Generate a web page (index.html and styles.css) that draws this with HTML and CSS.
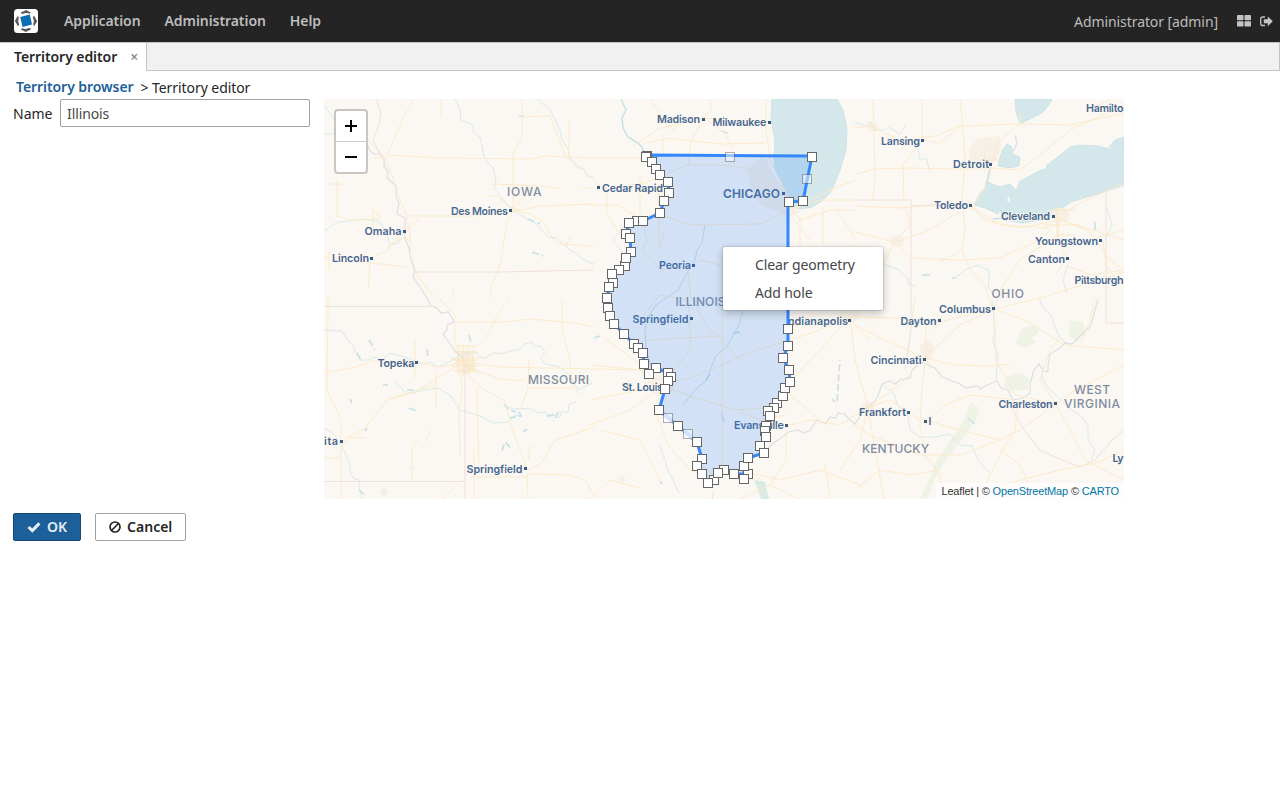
FILE: index.html
```html
<!DOCTYPE html>
<html lang="en">
<head>
<meta charset="utf-8">
<title>Territory editor</title>
<link rel="stylesheet" href="styles.css">
</head>
<body>
<header class="topbar">
  <svg class="logo" width="24" height="24" viewBox="0 0 24 24">
    <rect width="24" height="24" rx="3.5" fill="#fff"/>
    <path d="M6.200 8 15.800 5.600 18 15.400 8.600 18z" fill="#0b6fb5"/>
    <path d="M6.800 3.600 12.200 .9 17.300 3.900 15.300 4.600Q11.500 3.400 8.300 5.200zM20 6.500 23.200 12.200 20 17.200 19.200 15.400Q20.800 12 18.800 8.300zM17.200 20.200 11.700 23.100 6.500 20.200 8.500 19.200Q12 20.800 15.600 18.800zM4 17.300 .8 12 3.800 6.700 4.800 8.600Q3.300 12 5.200 15.700z" fill="#5a5a5a"/>
  </svg>
  <nav class="menu"><a>Application</a><a>Administration</a><a>Help</a></nav>
  <span class="user">Administrator [admin]</span>
  <svg class="ico-grid" width="14" height="12" viewBox="0 0 14 12" fill="#c4c4c4"><rect width="6.500" height="5.300" rx=".8"/><rect x="7.500" width="6.500" height="5.300" rx=".8"/><rect y="6.200" width="6.500" height="5.300" rx=".8"/><rect x="7.500" y="6.200" width="6.500" height="5.300" rx=".8"/></svg>
  <svg class="ico-exit" width="13" height="11" viewBox="0 0 13 11"><path d="M5 1H2.500Q.7 1 .7 2.800v4.400Q.7 9.500 2.500 9.500H5" fill="none" stroke="#c4c4c4" stroke-width="1.300"/><path d="M3.800 3.300h4V.5L12.800 5.300 7.800 10.200V7.300h-4z" fill="#c4c4c4"/></svg>
</header>
<div class="tabs">
  <div class="tab">Territory editor<span class="close">×</span></div>
  <div class="tabs-rest"></div>
</div>
<main class="page">
  <div class="crumbs"><a>Territory browser</a><span>&gt; Territory editor</span></div>
  <div class="editor">
    <label class="caption" for="name">Name</label>
    <input id="name" class="field" value="Illinois">
    <div class="map">
      <svg class="map-canvas" width="800" height="400" viewBox="324 99 800 400">
        <defs>
          <marker id="vertex" markerUnits="userSpaceOnUse" markerWidth="10" markerHeight="10" viewBox="0 0 10 10" refX="5" refY="5"><rect x=".5" y=".5" width="9" height="9" fill="#fff" stroke="#666"/></marker>
        </defs>
        <rect x="324" y="99" width="800" height="400" fill="#fbf8f3"/>

        <!-- lakes -->
        <g fill="#d4e8eb" stroke="#c9e0e5" stroke-width=".8">
          <path d="M772 99 771 120 775 140 774 158 775 169 780 178 786 190 788 200 793 207 800 209 812 207 822 201 830 193 835 183 840 170 846 150 847 128 843 110 837 99z"/>
          <path d="M1015 99 1016 112 1020 124 1032 118 1042 113 1048 106 1052 99z"/>
          <path d="M974 205 979 195 985 188 987 181 992 184 1000 187 1010 184 1014 188 1016 191 1020 181 1030 176 1041 170 1046 169 1047 165 1059 156 1070 147 1080 145 1098 146 1113 150 1124 153V185L1104 192 1084 198 1071 202 1060 210 1054 215 1041 220 1022 223 1004 220 1000 209 998 214 985 208z"/>
          <path d="M998 166 1000 157 1003 149 1007 144 1012 147 1012 154 1020 157 1019 166 1008 168z"/>
          <path d="M1109 147 1115 140 1124 137V152z"/>
        </g>
        <path d="M990 168 988 178 986 184" fill="none" stroke="#c9e0e5" stroke-width="2"/>
        <path d="M1008 197 1010 197 1010 202 1007 201z" fill="#fbf8f3"/>

        <!-- forests and urban areas -->
        <g fill="#eff3e6">
          <path d="M1022 328 1036 325 1039 332 1032 338 1036 342 1026 348 1015 344z"/>
          <path d="M1070 320 1083 322 1086 332 1077 342 1069 336z"/>
          <path d="M1005 377 1020 373 1029 378 1028 390 1011 391 1004 386z"/>
          <path d="M971 402 979 408 977 418 966 435 955 448 944 463 935 478 928 498 920 499 929 480 937 460 950 440 962 424z"/>
          <path d="M754 480 765 482 769 499 761 499 758 490z" fill="#d9ebe3"/>
          <circle cx="384" cy="492" r="4"/><circle cx="622" cy="479" r="3"/>
        </g>
        <g fill="#f7f0e6">
          <path d="M969 150 978 138 1000 136 1001 150 994 164 982 171 970 166z"/>
          <path d="M748 170 764 155 775 178 786 190 790 203 800 212 790 216 775 210 762 206 750 190z"/>
          <ellipse cx="873" cy="127" rx="5" ry="5"/><ellipse cx="897" cy="241" rx="7" ry="6"/><ellipse cx="1060" cy="215" rx="10" ry="7"/><ellipse cx="927" cy="350" rx="7" ry="10"/><ellipse cx="850" cy="315" rx="10" ry="8"/><ellipse cx="662" cy="385" rx="13" ry="10"/><ellipse cx="465" cy="362" rx="10" ry="12"/><ellipse cx="868" cy="407" rx="7" ry="5"/>
        </g>

        <!-- state borders -->
        <g fill="none" stroke="#f0dfdf" stroke-width="1">
          <path d="M376 99 381 112 379 125 373 140 378 150 384 158M414 272 500 272 594 270M324 306.500H431M465 360V499M324 481.500H465M855 200H911V206L972 203M911 206V330L905 370M1106 185V323H1124M1010 405 1024 430 1040 450 1062 460 1080 467 1095 460 1112 440 1124 430M712 499 714 490"/>
        </g>
        <g fill="none" stroke="#dcdfe2" stroke-width="1.200">
          <path d="M367 143 369 150 374 154 380 154 384 158 384 166 388 172 387 178 396 186 396 196 399 203 397 214 405 218 405 239 409 248 411 260 415 272 413 277 418 284 427 298 430 305 437 308 441 313 448 312 452 318 454 322 447 325 447 330 443 334 450 344 457 353 463 358M758 455 764 453 772 444 781 438 788 432 798 430 804 433 810 430 817 420 826 424 830 417 836 418 838 413 845 414 850 420 855 424 864 410 874 402 878 396 882 384 890 381 895 384 900 380 910 378 912 370 921 362 935 368 942 377 960 384 966 388 978 386 980 389 987 385 997 381 1001 388 1008 390 1011 396 1013 400 1023 398 1030 393 1030 384 1034 370 1039 364 1044 371 1048 372 1048 366 1050 354 1060 348 1065 343 1072 344 1079 337 1090 327 1094 314 1098 299M1015 135 1017 143 1014 150 1010 153"/>
        </g>

        <!-- rivers -->
        <g fill="none" stroke="#d8eaec" stroke-width="1">
          <path d="M324 134H334M324 105 336 122M455 99 460 109 461 120 473 125 473 132 480 137 482 145 484 157 493 168 496 180 494 188 500 195 508 206 518 214 535 223 548 237 556 238 562 243 570 250 576 253 580 257 588 262 594 264M537 99 550 110 560 130 562 140 568 149 570 158 578 168 583 168 587 176 594 178M324 231 338 222 350 221 362 219 380 222 387 235 390 245 398 243 401 238M324 330 342 331 346 338 353 346 360 360 368 360 375 357 382 360 390 353 408 358 422 364 430 362 438 367 451 361 459 356 463 354 475 352 480 357 485 358 494 352 500 354 510 351 516 350 520 349 525 344 532 342 534 346 540 346 545 352 541 358 545 364 560 367 565 372 572 378 578 390 592 383M394 380 407 394 425 390 438 388 451 396 455 403 460 410 480 416 493 423 508 422 515 415 521 416M324 428 335 435 344 450 350 466 350 472 354 479 359 480 359 487 362 499M577 402 569 404 568 413 562 411 559 418 554 415 549 417 545 412 537 413 530 408 517 409 505 407M625 225 613 240 622 252 630 261M660 445 668 470 679 493M868 255 885 265 899 270 908 278 908 284 915 286M955 278 965 270 978 265 990 271 988 285 993 295M992 300 995 330 993 342 998 355 996 380M1039 298 1043 308 1051 315 1054 325 1060 338 1066 343M1042 370 1043 380 1050 390 1072 410 1080 415 1088 425 1088 440 1095 450 1091 460M882 384 895 395 897 405 908 415 910 430 920 437 936 437 950 434 960 445 972 446 978 460 990 473M855 122 865 126 870 122 875 130 885 130 888 127 900 134 906 125M918 148 920 160 926 158 930 172M1106 206 1112 225 1105 240M1068 265 1063 280 1067 293"/>
          <path d="M621 99 626 110 622 118 623 128 628 137 638 143 642 147 645 156" stroke="#c9e1e5" stroke-width="1.500"/>
          <path d="M705 225 702 243 697 250 695 260 686 275 678 290 666 298 656 305 647 318 645 330 646 347 651 367M743 311 739 325 728 345 715 357 707 380 695 390 683 405" stroke="#cbe2e6"/>
          <g stroke="#c6e0e6" stroke-width="1.600">
            <path d="M369 340 375 350M357 353 361 360M427 349 428 358M469 335 471 342M383 385H388M407 390H414M350 399 352 403M409 408 417 411M504 404 508 409 516 412M509 418 521 416 517 408M547 416 558 413 553 421M502 451 505 442 511 448M523 432 527 429M365 431 367 428M359 490 365 495M411 467V468M594 338 600 336M532 252 543 256M528 219 540 224M519 116H524M721 131 728 133M733 333 741 332M835 402 832 399M837 401 840 360" stroke-dasharray="7 3"/>
            <path d="M722 414 724 422M706 380 710 374M922 275H930M952 278H956M968 418 975 424M1095 222V230M993 219 1003 218M660 481 662 484"/>
          </g>
        </g>

        <!-- roads -->
        <g fill="none" stroke="#fdeaca" stroke-width="1">
          <path d="M414 99 404 117 396 135 387 155 405 156 445 158 530 159 545 156 590 158 646 158M522 99V138L513 153V210M522 117 550 116 565 155 590 175 594 179M368 139 384 158 392 175 398 195 406 214 410 235 411 258 418 276 428 290 436 298M407 216H473L513 212 540 206 594 204M375 158H387M569 119V157M337 180V216L350 220 380 219M329 184H347M329 252V270M324 257H330M361 262 388 250 395 240 405 232 420 218M361 262 407 267M370 262 368 290M373 240V209L380 217M410 240 401 238 387 248M513 210 507 224 504 240 501 262 492 285 490 298M513 210 530 214 545 224 555 243 574 245 594 246M565 247 572 235M491 184 540 186 559 188M488 196H497L510 207 520 210M513 208 527 195M582 188H594M441 118V99M453 290V298M328 298 327 390 341 420V499"/>
          <path d="M324 373 355 367 373 361 400 362 415 361 437 367 452 365 465 358M415 340V378M465 360 450 370 435 380 416 391 388 399 365 428 347 438H365M347 440 341 445M440 299 455 315 457 322H505L530 319 575 323 594 327M455 322V343L465 360M511 298 500 310 487 336 465 358M562 299V330L570 360 572 385 580 395M465 362 500 367 640 370M465 363 480 372 500 379 524 381M465 362 470 378 485 390 505 401 513 432 522 455 527 470M436 370V407M477 388V400L479 464M460 368 462 390 459 410 460 455M475 358H485L500 352M520 410 528 388 529 360M530 388H572M527 470 540 465 555 440 580 432 594 427M527 474 570 475 585 480 594 495M527 475 528 499M470 477H527M324 458H340M465 478 450 492 443 499M531 445 528 460M417 440 412 450V480M430 430 425 442M474 450V499M391 399 435 385"/>
          <path stroke="#fbe3b6" d="M455 346H475M453 352H478M451 360H478M451 366H478M453 371H475M458 346V374M463 344V376M468 346V374M473 350V372M450 357 478 373M1048 210H1075M1045 225H1080M1055 235H1075M1057 206V240M980 160H1000M985 150V172" stroke-width=".8"/>
          <path d="M631 147 660 128 700 120 704 118M650 99 672 130 684 122 704 118 745 121 770 122M704 118 712 108 709 99M704 118 725 133 733 150M646 143 670 138 720 144 765 143M766 99V130L770 160 782 183 789 202M663 135V155M594 180 604 189 645 183 688 165 720 165 747 168 780 192M704 118 691 140 688 165M607 187V213L618 232M640 175V219M659 183V247L665 230M590 205H618L640 219 655 213 690 225 760 224 790 210M694 266 660 270 642 250 647 240 642 220M694 265 700 260 720 265 740 270M688 266 690 295 706 325 725 345 740 360M690 320 688 300 660 295 640 320M690 320 690 350 670 375M670 382 690 378 710 370 750 352 790 340 820 330 850 317M663 387 700 399 735 410 780 407M722 305V470M590 400 640 390 663 386M592 365 640 370 663 386M663 386 655 410 668 445 690 470 720 480M590 425 630 410 663 386M605 338 650 372M646 340 720 336M855 317 820 325 790 326M788 203 795 208 820 200 855 200M788 203 800 220 830 210 855 210M800 218V245M823 207V245M838 212 850 230 855 240M790 215 810 240M855 180 830 190 805 203"/>
          <path d="M855 128 870 126 900 140 935 136 960 126 1020 124 1070 125 1124 113M873 99 875 175 873 200M922 99 922 140 903 165 904 200M960 99 963 130 965 160 962 200 965 230 962 250 940 262M923 140 940 143 962 125M855 174 875 169 905 168 960 169 990 168 1020 170 1040 155 1070 130 1124 105M990 165 1000 140 1020 124V112M855 206 900 208 940 205 970 206 985 220 1020 228 1060 220 1124 240M855 232 895 242 925 232 960 212M990 165 984 190 970 210M895 242 880 270 855 300M895 242 910 225 905 206M897 243 910 258 960 260 1000 258 1040 240 1060 220M1060 215 1080 203 1124 183M1060 215 1058 235 1066 260 1055 275M1060 218 1090 232 1110 260 1124 270M1058 235 1020 260 1000 290 994 309M1066 245 1090 240 1106 235 1124 230M1066 265 1090 275 1124 270M962 250 970 270 985 285 992 307M1103 240 1106 265 1120 285M855 245 865 260 855 270M1110 99 1098 105M970 206 1000 225 1050 228"/>
          <path d="M855 317 900 318 940 322 994 309 1040 298 1124 272M994 309 960 325 927 355 900 385 868 407M855 325 885 340 925 358 955 365 992 366 1010 364M994 309 996 360 1015 395 1056 404M994 309 1025 320 1065 345 1124 350M925 358 922 390 920 425 925 455 940 475 945 499M868 407 890 400 920 420M868 407 860 440 840 470M868 407 875 450 884 499M925 420 960 430 1000 440 1020 430 1056 404M925 425 945 405 970 395 1000 398 1014 400M855 425 870 435 920 455 960 455 1000 440M1056 404 1040 380 1050 350 1058 340M1056 404 1075 390 1124 365M1056 404 1070 430 1085 460 1124 480M1018 404 1015 430 1000 455 985 485 970 499M990 490 1020 480 1060 470 1100 462 1124 450M855 490 880 470 910 475 940 470M1000 450 1020 465 1035 499M926 325V356L930 370M945 310 935 330M915 298 912 320M1095 298 1090 320 1080 345M786 426 810 420 840 425 868 407M786 426V460L770 485 740 499M790 395 820 420M850 317 855 360 868 407M850 317 820 350 790 382M740 470 780 480 820 470 860 485M770 485 800 499M786 415 760 420 740 412M720 480 700 465M848 317 870 340M825 465 830 499M590 499 610 480 640 488M600 430 640 440 660 480"/>
        </g>

        <!-- labels -->
        <g class="city">
          <text x="657" y="123" textLength="43">Madison</text><text x="712.500" y="125.500" textLength="54">Milwaukee</text>
          <text x="451" y="214.500" textLength="57">Des Moines</text><text x="364.500" y="235" textLength="37">Omaha</text><text x="332" y="262" textLength="37">Lincoln</text>
          <text x="602" y="191.500" textLength="61">Cedar Rapid</text><text x="659" y="269" textLength="32">Peoria</text><text x="632.500" y="322.500" textLength="56">Springfield</text>
          <text x="788" y="324.500" textLength="60">ndianapolis</text><text x="622" y="391" textLength="41">St. Louis</text><text x="377.500" y="366.500" textLength="37">Topeka</text>
          <text x="466.500" y="472.500" textLength="56">Springfield</text><text x="324" y="445" textLength="14">ita</text><text x="734" y="429" textLength="50">Evansville</text>
          <text x="881" y="144.500" textLength="39">Lansing</text><text x="953" y="168" textLength="36">Detroit</text><text x="934" y="209" textLength="34">Toledo</text><text x="1001" y="220" textLength="49">Cleveland</text>
          <text x="1035" y="244.500" textLength="63">Youngstown</text><text x="1028" y="263" textLength="37">Canton</text><text x="1074.500" y="284" textLength="49">Pittsburgh</text><text x="1086" y="111.500" textLength="37.500">Hamilto</text>
          <text x="939" y="312.500" textLength="52">Columbus</text><text x="900.500" y="325" textLength="36">Dayton</text><text x="870.500" y="363.500" textLength="51">Cincinnati</text><text x="859" y="416" textLength="47">Frankfort</text>
          <text x="998.500" y="407.500" textLength="54">Charleston</text><text x="928.500" y="425">l</text><text x="1112.500" y="462" textLength="11">Ly</text>
        </g>
        <g class="bigcity"><text x="723" y="198" textLength="57">CHICAGO</text></g>
        <g class="state">
          <text x="507" y="195.500" textLength="34.500">IOWA</text><text x="528" y="384" textLength="61">MISSOURI</text><text x="675.500" y="306" textLength="50">ILLINOIS</text>
          <text x="991.500" y="297.500" textLength="32.500">OHIO</text><text x="862" y="453" textLength="67">KENTUCKY</text><text x="1074" y="393.500" textLength="36">WEST</text><text x="1064" y="408" textLength="56">VIRGINIA</text>
        </g>
        <path class="dots" d="M702 118h3v3h-3zM768 121h3v3h-3zM597 186h3v3h-3zM782 192h3v3h-3zM509 209h3v3h-3zM403 230h3v3h-3zM370 257h3v3h-3zM692 264h3v3h-3zM690 317h3v3h-3zM848 319h3v3h-3zM415 361h3v3h-3zM340 440h3v3h-3zM524 467h3v3h-3zM785 424h3v3h-3zM921 139h3v3h-3zM989 163h3v3h-3zM969 204h3v3h-3zM1052 215h3v3h-3zM1099 239h3v3h-3zM1066 257h3v3h-3zM992 307h3v3h-3zM938 319h3v3h-3zM923 358h3v3h-3zM907 411h3v3h-3zM924 420h3v3h-3zM1054 402h3v3h-3z"/>

        <!-- territory polygon -->
        <path fill="#3388ff" fill-opacity=".2" stroke="#3388ff" stroke-width="3" stroke-linejoin="round" d="M646 155 652 162 656 169 660 175 668 182 669 193 664 201 660 213 643 221 637 221 629 223 626 234 630 238 631 252 626 258 625 266 619 270 612 274 613 283 609 287 607 298 608 308 610 316 614 324 624 334 634 344 638 348 643 353 644 364 649 374 656 368 668 373 671 377 668 381 665 389 659 410 678 426 697 442 702 459 697 466 702 474 708 483 714 480 718 473 724 470 734 474 748 474 744 479 744 466 748 458 764 453 760 446 766 437 765 431 766 426 770 416 768 411 774 408 777 403 783 396 785 388 790 382 789 370 783 358 788 346 788 202 803 201 812 156z"/>
        <path d="M663 413.500 674 423M682 429.500 693 438.500" stroke="#a5c8fb" stroke-width="3.600"/>
        <path fill="none" marker-start="url(#vertex)" marker-mid="url(#vertex)" marker-end="url(#vertex)" d="M647 156 646 157 652 162 656 169 660 175 668 182 669 193 664 201 660 213 637 221 643 221 629 223 626 234 630 238 631 252 625 266 626 258 619 270 612 274 613 283 609 287 607 298 608 308 610 316 614 324 624 334 634 344 638 348 643 353 644 364 656 368 649 374 668 373 671 377 668 381 665 389 659 410 678 426 697 442 702 459 697 466 702 474 714 480 708 483 724 470 718 473 734 474 748 474 744 479 744 466 748 458 760 446 764 453 766 426 765 431 766 437 777 403 774 408 768 411 770 416 783 396 785 388 790 382 789 370 783 358 788 346 788 329 789 202 803 201 812 157"/>
        <g fill="#fff" stroke="#666" opacity=".5"><rect x="725.500" y="152.500" width="9" height="9"/><rect x="802.500" y="174.500" width="9" height="9"/><rect x="663.500" y="413.500" width="9" height="9"/><rect x="683.500" y="429.500" width="9" height="9"/></g>
      </svg>
      <div class="zoom">
        <a><svg width="14" height="14" viewBox="0 0 14 14"><path d="M1 7h12M7 1v12" stroke="#000" stroke-width="2"/></svg></a>
        <a><svg width="14" height="14" viewBox="0 0 14 14"><path d="M1 7h12" stroke="#000" stroke-width="2"/></svg></a>
      </div>
      <div class="context"><div>Clear geometry</div><div>Add hole</div></div>
      <div class="attribution">Leaflet | © <a>OpenStreetMap</a> © <a>CARTO</a></div>
    </div>
  </div>
  <div class="actions">
    <button class="btn primary"><svg width="14" height="12" viewBox="0 0 14 12"><path d="M1.500 6 5.300 9.600 12.400 2.400" fill="none" stroke="#e8eff5" stroke-width="3"/></svg>OK</button>
    <button class="btn"><svg width="12" height="12" viewBox="0 0 12 12" fill="none" stroke="#262626" stroke-width="1.700"><circle cx="6" cy="6" r="5"/><path d="M2.500 9.500l7-7"/></svg>Cancel</button>
  </div>
</main>
</body>
</html>
```
FILE: styles.css
```css
* { box-sizing: border-box; }
body { margin: 0; background: #fff; color: #262626; font: 14px/20px "Noto Sans", "Open Sans", sans-serif; }
.topbar { display: flex; align-items: center; height: 42px; padding: 0 7px 0 14px; background: #242424; color: #bdbdbd; }
.menu { display: flex; gap: 24px; margin-left: 26px; font-weight: 600; letter-spacing: -.07px; }
.user { margin-left: auto; padding-top: 1px; letter-spacing: -.08px; }
.ico-grid { margin-left: 19px; }
.ico-exit { margin-left: 9px; }
.tabs { display: flex; height: 29px; }
.tab { display: flex; align-items: center; width: 147px; padding-left: 14px; border-top: 1px solid #c4c4c4; border-right: 1px solid #c4c4c4; font-weight: 600; letter-spacing: -.07px; white-space: nowrap; }
.close { margin-left: 13px; color: #888; }
.tabs-rest { flex: 1; background: #f1f1f1; border: 1px solid #c4c4c4; border-left: 0; }
.page { padding: 6px 13px 0; }
.crumbs { display: flex; gap: 7px; height: 22px; padding-left: 3px; letter-spacing: -.07px; }
.crumbs a { color: #1d6099; font-weight: 600; }
.crumbs span { padding-top: 1px; }
.editor { display: flex; align-items: flex-start; }
.caption { width: 47px; padding-top: 5px; }
.field { width: 250px; height: 28px; padding: 0 6px; border: 1px solid #a0a0a0; border-radius: 2px; color: #474747; font: inherit; letter-spacing: -.1px; }
.map { position: relative; width: 800px; height: 400px; margin-left: 14px; overflow: hidden; }
.map-canvas { display: block; }
.city, .bigcity, .state { font-family: Inter, sans-serif; }
.city { font-size: 10.8px; font-weight: 600; fill: #47668e; }
.bigcity { font-size: 12px; font-weight: 600; fill: #47668e; }
.state { font-size: 12px; font-weight: 500; fill: #7f8c9f; }
.city text, .bigcity text { stroke: #fbf8f3; stroke-width: 2px; stroke-opacity: .7; paint-order: stroke; }
.dots { fill: #3a5880; }
.zoom { position: absolute; left: 10px; top: 10px; width: 34px; border: 2px solid #c9c6c2; border-radius: 4px; background: #fff; }
.zoom a { display: flex; align-items: center; justify-content: center; height: 30px; }
.zoom a:first-child { height: 31px; border-bottom: 1px solid #ccc; }
.context { position: absolute; left: 399px; top: 148px; width: 160px; height: 63px; padding: 4px 0 3px 32px; border-radius: 2px; background: #fff; box-shadow: 0 0 0 1px rgba(0,0,0,.09), 0 3px 8px rgba(0,0,0,.25); color: #474747; line-height: 28px; letter-spacing: -.12px; }
.attribution { position: absolute; right: 0; bottom: 0; padding: 0 5px; background: rgba(255,255,255,.7); color: #333; font: 11px/16px "Liberation Sans", Arial, sans-serif; letter-spacing: -.17px; }
.attribution a { color: #0078a8; }
.actions { display: flex; gap: 14px; padding-top: 14px; }
.btn { display: flex; align-items: center; gap: 6px; height: 28px; padding: 0 13px; border: 1px solid #a0a0a0; border-radius: 2px; background: #fff; color: #262626; font: 600 14px/20px "Noto Sans", "Open Sans", sans-serif; }
.btn.primary { border-color: #14466f; background: #1d6099; color: #e8eff5; }
```
